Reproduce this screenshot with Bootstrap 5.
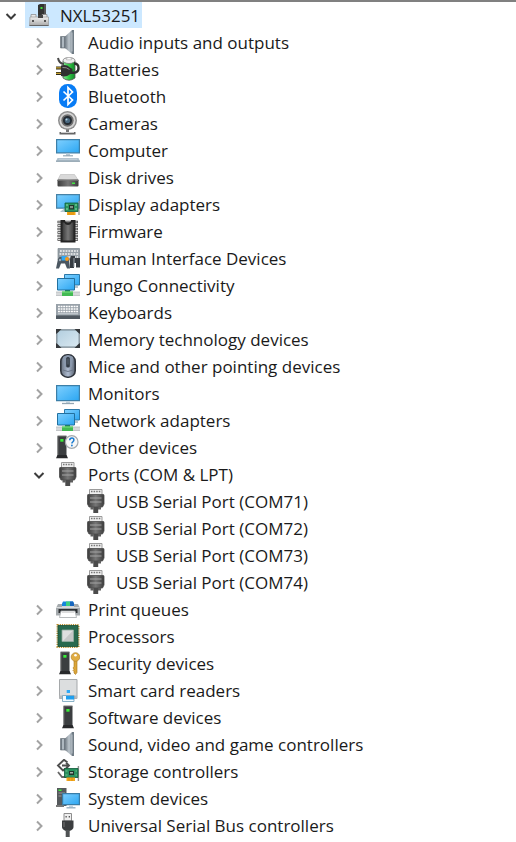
<!DOCTYPE html>
<html lang="en">
<head>
<meta charset="utf-8">
<meta name="viewport" content="width=device-width, initial-scale=1">
<title>Device Manager</title>
<link href="https://cdn.jsdelivr.net/npm/bootstrap@5.3.0/dist/css/bootstrap.min.css" rel="stylesheet">
<style>
  body { font-family: "Open Sans", "Segoe UI", sans-serif; font-size: 17px; line-height: 26px; color: #1a1a1a; background: #fff; }
  .device-tree { border-top: 2px solid #808080; padding-left: 1px; }
  .device-tree ul { padding-left: 28px; }
  .tree-row { height: 27px; gap: 4px; }
  .twisty { width: 20px; height: 28px; color: #a3a3a3; }
  .twisty[aria-expanded="true"] { color: #3c3c3c; }
  .twisty-space { width: 20px; }
  .twisty svg { width: 12px; height: 12px; fill: none; stroke: currentColor; stroke-width: 2; }
  .device { height: 26px; gap: 8px; padding: 0 2px 0 3px; white-space: nowrap; }
  .device.selected { background: #cce8ff; }
  .device > svg { width: 24px; height: 24px; flex: none; }
  .device-name { line-height: 28px; height: 26px; }
</style>
<script src="https://cdn.jsdelivr.net/npm/bootstrap@5.3.0/dist/js/bootstrap.bundle.min.js"></script>
</head>
<body>
<svg width="0" height="0" class="position-absolute" aria-hidden="true">
  <defs>
    <linearGradient id="gScreen" x1="0" y1="0" x2="1" y2="1"><stop offset="0" stop-color="#7fd0ff"/><stop offset="1" stop-color="#2ba6f2"/></linearGradient>
    <linearGradient id="gPale" x1="0" y1="0" x2="1" y2="1"><stop offset="0" stop-color="#b2cedf"/><stop offset="1" stop-color="#dbe9f1"/></linearGradient>
    <linearGradient id="gCone"><stop offset="0" stop-color="#727c85"/><stop offset=".5" stop-color="#bcc5cc"/><stop offset="1" stop-color="#7d8992"/></linearGradient>
    <linearGradient id="gDark"><stop offset="0" stop-color="#3c3c3c"/><stop offset=".5" stop-color="#777"/><stop offset="1" stop-color="#3c3c3c"/></linearGradient>
    <linearGradient id="gGrey" x1="0" y1="0" x2="0" y2="1"><stop offset="0" stop-color="#f0f0f0"/><stop offset="1" stop-color="#a9a9a9"/></linearGradient>
    <linearGradient id="gMouse"><stop offset="0" stop-color="#66707e"/><stop offset=".5" stop-color="#aebbd0"/><stop offset="1" stop-color="#586270"/></linearGradient>
    <linearGradient id="gGreen"><stop offset="0" stop-color="#8ee69a"/><stop offset=".45" stop-color="#35cc48"/><stop offset="1" stop-color="#128a2a"/></linearGradient>

    <symbol id="i-root" viewBox="0 0 24 24">
      <path d="M10 2l2-1h6v12h-8z" fill="#333"/><path d="M16 1h2v12h-2z" fill="#555"/><path d="M12.500 4h2v2h-2z" fill="#3be03b"/>
      <path d="M3 11.500h5v3H3zm11 0h5v3h-5z" fill="#e9e9e9" stroke="#888" stroke-width=".7"/>
      <path d="M2 14h18.500v8.500H1.500z" fill="url(#gGrey)" stroke="#999" stroke-width=".7"/>
      <path d="M10 12h5v3h-5z" fill="#444"/><path d="M4 17h2v2H4zm12 0h2v2h-2z" fill="#555"/><path d="M1.500 22.500h19" stroke="#666" stroke-width="1"/>
    </symbol>
    <symbol id="i-audio" viewBox="0 0 24 24">
      <path d="M4.500 6.500h5.500v11.500H4.500z" fill="#707a83" stroke="#616b73" stroke-width=".6"/><path d="M6 7h2v10.500H6z" fill="#aeb8c0"/>
      <path d="M9 6.500L16 0h1v24h-1L9 18z" fill="url(#gCone)"/><path d="M16 0h2v24h-2z" fill="#707c85"/><path d="M16 2.500v19" stroke="#cad2d8" stroke-width=".8"/>
    </symbol>
    <symbol id="i-battery" viewBox="0 0 24 24">
      <path d="M7 4q6-6 12 0v17q-6 4.500-12 0z" fill="url(#gGreen)" stroke="#555" stroke-width=".8"/>
      <ellipse cx="13" cy="3.500" rx="6" ry="3" fill="#eee" stroke="#777" stroke-width=".8"/><path d="M10.500 1.300q2.500-2 5 0v1.500h-5z" fill="#fafafa" stroke="#999" stroke-width=".5"/>
      <path d="M2 1q1 5.500 6 6" stroke="#484848" stroke-width="2" fill="none"/>
      <path d="M14 15.500q8.500 1.500 8.500-4.500 0-4.500-4.500-4.500" stroke="#2f2f2f" stroke-width="2.400" fill="none"/>
      <path d="M0 11h6m-6 5.500h6" stroke="#2d2a1d" stroke-width="2.800"/><path d="M0 10.800h5m-5 5.500h5" stroke="#c8a332" stroke-width="1.300"/>
      <path d="M5 8.500q5.500-1.500 9 2l2.500 1.500v4l-2.500 1.200q-4 3.300-9 1.800z" fill="#303030"/><path d="M6.500 10.500q4-.5 7 2" stroke="#8c8c8c" fill="none"/>
    </symbol>
    <symbol id="i-bluetooth" viewBox="0 0 24 24">
      <rect x="3" y="0" width="18" height="24" rx="8.500" fill="#087cf5"/>
      <path d="M7.500 7.500l9 8.500-4.500 4.500v-17l4.500 4.500-9 8.500" fill="none" stroke="#fff" stroke-width="1.700"/>
    </symbol>
    <symbol id="i-camera" viewBox="0 0 24 24">
      <path d="M10 17h3v5h-3z" fill="#777"/><path d="M3.500 21h16v2.500h-16z" fill="#666"/><path d="M5 21h13v1H5z" fill="#ccc"/>
      <circle cx="11.500" cy="9.500" r="9.500" fill="#8e8e8e"/><circle cx="11.500" cy="9.500" r="8" fill="#d4d4d4"/><circle cx="11.500" cy="9.500" r="6.200" fill="#6f6f6f"/>
      <circle cx="11.500" cy="9.500" r="4.500" fill="#242c34"/><circle cx="11.500" cy="9.500" r="2.600" fill="#49687f"/><circle cx="10.500" cy="8.500" r="1" fill="#b5d3e5"/>
    </symbol>
    <symbol id="i-computer" viewBox="0 0 24 24">
      <path d="M.6 1.600h22.800v13.200H.6z" fill="url(#gScreen)" stroke="#3c7fa8" stroke-width="1.200"/>
      <path d="M10 15.500h4V18h-4z" fill="#b7c9d5"/><path d="M7 17.800h10" stroke="#96a9b5" stroke-width="1.200"/>
      <path d="M1.500 20h21l1.500 3.500H0z" fill="#b2c2cd"/><path d="M0 23.200h24" stroke="#8ea0ad" stroke-width="1.200"/><path d="M3 21.300h18" stroke="#c9d6de" stroke-width=".8"/>
    </symbol>
    <symbol id="i-disk" viewBox="0 0 24 24">
      <path d="M4.500 9.500h14l4 6H1.500z" fill="#d9d9d9" stroke="#bbb" stroke-width=".6"/>
      <rect x="1.500" y="14.500" width="21" height="7" rx="1" fill="url(#gDark)"/><path d="M1.500 15.300h21" stroke="#777"/><path d="M16 17.500h3v1.500h-3z" fill="#43e843"/>
    </symbol>
    <symbol id="i-display" viewBox="0 0 24 24">
      <path d="M.6 2.600h22.800v13.600H.6z" fill="url(#gScreen)" stroke="#4782a6" stroke-width="1.200"/>
      <path d="M4 20l4-3.500h3V20z" fill="#b6c8d4"/>
      <path d="M23 9v14" stroke="#929292" stroke-width="1.300"/><path d="M9 11h13v8.500H9z" fill="#2b9560" stroke="#0e5d39" stroke-width=".8"/>
      <path d="M13 13h5v4.500h-5z" fill="#20352b"/><path d="M14 14h3v2.200h-3z" fill="#809187"/><path d="M10 13h2m-2 4h2m7-4h2m-2 4h2" stroke="#8fdcaa"/>
      <path d="M11 20h8.500v3H11z" fill="#f4a81c"/><path d="M13 20v3m2-3v3m2-3v3" stroke="#d17e08" stroke-width=".6"/>
    </symbol>
    <symbol id="i-firmware" viewBox="0 0 24 24">
      <path d="M1.500 3h20.500M1.500 6.500h20.500M1.500 10h20.500M1.500 13.500h20.500M1.500 17h20.500M1.500 20.500h20.500" stroke="#3d3d3d" stroke-width="2.600"/>
      <path d="M2 3h19.500M2 6.500h19.500M2 10h19.500M2 13.500h19.500M2 17h19.500M2 20.500h19.500" stroke="#d5d5d5" stroke-width="1.200"/>
      <path d="M4.500 1h4.500q0 2.500 3 2.500t3-2.500h4.500v22.500h-15z" fill="#242424"/><path d="M6.500 3.500h1.700q1 2.500 3.800 2.500t3.800-2.500h1.700v18h-11z" fill="url(#gDark)"/>
    </symbol>
    <symbol id="i-hid" viewBox="0 0 24 24">
      <path d="M2 2.500h21.500V14H2z" fill="#97a0a8" stroke="#7c868e" stroke-width=".7"/>
      <path d="M4 5h18M3.500 8h19M4 11h18" stroke="#f4f4f4" stroke-width="1.600" stroke-dasharray="1.800 1"/>
      <path d="M4 10.500h7l2 2.500 1 9.500h-3l-2-5H5l-2 5H0L2 13z" fill="#4b5761"/>
      <path d="M15 10h4v2h5v9.500h-4V17h-2v5h-4v-9z" fill="#363c42"/><path d="M18 12v9" stroke="#99a2aa"/>
      <path d="M5.500 10h5v4.500h-5z" fill="#31a8f3"/><circle cx="11" cy="13" r="2" fill="#f79a1c"/><circle cx="4" cy="14" r="1.200" fill="#9ca9b4"/>
    </symbol>
    <symbol id="i-network" viewBox="0 0 24 24">
      <path d="M8.500 1.500h15v10.500h-15z" fill="url(#gScreen)" stroke="#2c79a9"/><path d="M17 13h5v2h-5z" fill="#b7c5ce"/>
      <path d="M0 19h24v3.500H0z" fill="#d7d9da"/><path d="M0 22.500h24M0 19h24" stroke="#b0b5b8" stroke-width=".7"/>
      <path d="M9 16.500h5v3H9z" fill="#178d36"/><path d="M6 18.500h11V23H6z" fill="#42ba53"/><path d="M6 19h11" stroke="#7ce083"/>
      <path d="M1.500 5.500h17v11.500h-17z" fill="url(#gScreen)" stroke="#22709f"/>
    </symbol>
    <symbol id="i-keyboard" viewBox="0 0 24 24">
      <path d="M0 4h24v12H0z" fill="#98a1a9"/><path d="M2 6.500h20M2 9h20M2 11.500h20" stroke="#fff" stroke-width="1.500" stroke-dasharray="1.900 .7"/>
      <path d="M2 13.800h20" stroke="#cfd5da" stroke-width="1"/><path d="M0 15.500h24V19H0z" fill="#4f5860"/><path d="M0 15.500h24" stroke="#6d777f"/>
    </symbol>
    <symbol id="i-memory" viewBox="0 0 24 24">
      <rect x=".8" y="2.800" width="22.400" height="17.400" rx="1" fill="url(#gPale)" stroke="#77858f" stroke-width="1.200"/>
      <path d="M0 2h5.500L3.500 4 2 5.500 0 7zm24 0h-5.500l2 2L22 5.500 24 7zM0 21h5.500l-2-2L2 17.500 0 16zm24 0h-5.500l2-2 1.500-1.500 2-1.500z" fill="#35383b"/>
    </symbol>
    <symbol id="i-mouse" viewBox="0 0 24 24">
      <rect x="4.800" y=".8" width="14.400" height="22.400" rx="6.500" fill="url(#gMouse)" stroke="#30353d" stroke-width="1.600"/>
      <path d="M7 3q5-3.500 10 0l-1 10H8z" fill="#8a98ac"/><rect x="10.200" y="3" width="3.600" height="10.500" rx="1.500" fill="#333b45"/><path d="M12 4.500v6" stroke="#697787" stroke-width=".8"/>
      <path d="M7 16q5 3 10 0" stroke="#6d788a" fill="none"/>
    </symbol>
    <symbol id="i-monitor" viewBox="0 0 24 24">
      <path d="M.6 4.600h22.800v15H.6z" fill="url(#gScreen)" stroke="#3c7fa8" stroke-width="1.200"/>
      <path d="M10 20.200h4v2h-4z" fill="#c3d4df"/><path d="M6 22.500h12" stroke="#93a6b3" stroke-width="1.300"/>
    </symbol>
    <symbol id="tower" viewBox="0 0 12 24">
      <path d="M1.500 1h9v20h-9z" fill="#3b3e40"/><path d="M1.500 1h9" stroke="#777"/><path d="M4.300 4h3.200v2.700H4.300z" fill="#39ee39"/><path d="M2.300 2v18" stroke="#555"/>
      <path d="M1.500 20h9l1.500 3.200H0z" fill="#28292b"/>
    </symbol>
    <symbol id="i-other" viewBox="0 0 24 24">
      <use href="#tower" x="0" y="0" width="12" height="24"/><circle cx="15.700" cy="7" r="6.300" fill="#f8f8f8" stroke="#a4a9ad" stroke-width="1.200"/>
      <path d="M13.700 5.300q.2-2.200 2.200-2.200t2 1.900q0 1-1.100 1.800-.9.600-.9 1.700" fill="none" stroke="#1c7cd0" stroke-width="1.500"/><circle cx="15.900" cy="10.500" r=".9" fill="#1c7cd0"/>
    </symbol>
    <symbol id="i-port" viewBox="0 0 24 24">
      <path d="M5.500.5h12.500v6H5.500z" fill="#eee" stroke="#9b9b9b"/><path d="M7 2.500h9.500" stroke="#777" stroke-width="1.500" stroke-dasharray="1.500 1.100"/>
      <path d="M4 5.500h15.500q.5 0 .5 1v8.500l-1.500 3H5l-1.500-3V6.500q0-1 .5-1z" fill="url(#gDark)" stroke="#4a4a4a" stroke-width=".8"/><path d="M6 9h11.500M6 13h11.500" stroke="#a6a6a6"/>
      <path d="M6.500 18h3v2.500h-3zm7.500 0h3v2.500h-3z" fill="#5e5e5e"/><path d="M9.300 18h4.900v6H9.300z" fill="#4b4b4b"/>
    </symbol>
    <symbol id="i-printer" viewBox="0 0 24 24">
      <path d="M5 9l2-4.500h10L19 9z" fill="#1585dc"/><path d="M10 4.500h4V9h-4z" fill="#3ccf80"/><path d="M14 4.500h3L19 9h-5z" fill="#1766bd"/>
      <path d="M2 7h4v2.500h12V7h4l2 4v7.500H0V11z" fill="#a5aaad"/><path d="M0 10.500h24" stroke="#d9dbdc"/><path d="M2.500 12h19v4h-19z" fill="#2d3033"/>
      <path d="M5 14h14l1.500 6.500h-17z" fill="#fff" stroke="#a7abad" stroke-width=".8"/><path d="M6 15.500h12" stroke="#ddd"/>
    </symbol>
    <symbol id="i-cpu" viewBox="0 0 24 24">
      <path d="M1.500 1h21v22h-21z" fill="none" stroke="#b88c2c" stroke-width="2" stroke-dasharray="1.200 1"/>
      <path d="M2 1.500h20v21H2z" fill="#28694e" stroke="#17513a" stroke-width=".8"/><path d="M6 6h11.500v11.500H6z" fill="#dedfdf" stroke="#92aaa0" stroke-width=".8"/><path d="M17 6.500v10.500H7z" fill="#c5c7c7"/>
    </symbol>
    <symbol id="i-security" viewBox="0 0 24 24">
      <use href="#tower" x="3" y="0" width="12" height="24"/>
      <path d="M18 9.500h3v12l-1.500 2-1.500-1.500v-1.500l-1-1 1-1.200-1-1.300 1-1.500z" fill="#dba63b" stroke="#a97619" stroke-width=".6"/>
      <circle cx="19.500" cy="6" r="4.300" fill="#e0ac42" stroke="#b2842d" stroke-width=".7"/><circle cx="19.500" cy="4.300" r="1.300" fill="#fff"/>
    </symbol>
    <symbol id="i-smart" viewBox="0 0 24 24">
      <path d="M3.500 1.500h17.500v19H3.500z" fill="#dcdedf" stroke="#a5a8aa"/><path d="M10.700 12h3.300v3h-3.300z" fill="#2fa9f7"/>
      <path d="M3.500 17.500h17.500v3H3.500z" fill="#b7babc"/><path d="M6.500 17.500h11.500v6H6.500z" fill="#f4fbff" stroke="#6f9fba" stroke-width=".8"/><path d="M10 18h8v3.500h-8z" fill="#1f9fef"/>
    </symbol>
    <symbol id="i-software" viewBox="0 0 24 24"><use href="#tower" x="6" y="0" width="12" height="24"/></symbol>
    <symbol id="i-storage" viewBox="0 0 24 24">
      <path d="M11.500 3.500L8 .8 2 6.500l5 5 2.500-2M6 6.500h7m-3-3l3 3-3 3" fill="none" stroke="#4e4e4e" stroke-width="1.900"/><path d="M2 13l4 5h4" fill="none" stroke="#666" stroke-width="1.800"/>
      <path d="M22.400 7v15" stroke="#929292" stroke-width="1.400"/><path d="M8.500 9.500h13.500v9H8.500z" fill="#2a915f" stroke="#0d5837" stroke-width=".8"/>
      <path d="M13 12h5v4h-5z" fill="#20352b"/><path d="M14 13h3v1.500h-3z" fill="#a4b3aa"/><path d="M9.500 12h2m-2 4h2m8-4h1.500m-1.500 4h1.500" stroke="#72c290"/>
      <path d="M10.500 18.500h8.500V22h-8.500z" fill="#f4a81c"/><path d="M13 18.500V22m3-3.500V22" stroke="#cf8211" stroke-width=".6"/>
    </symbol>
    <symbol id="i-system" viewBox="0 0 24 24">
      <path d="M1 2h9.500v18H1z" fill="#55595c"/><path d="M2.500 3.500h3V5h-3z" fill="#3bf03b"/><path d="M2.500 7h6.500m-6.500 3h3" stroke="#999"/><path d="M0 19h8v2H0z" fill="#777"/>
      <path d="M6.600 7.600h16.800v11H6.600z" fill="url(#gScreen)" stroke="#397da7" stroke-width="1.200"/><path d="M13 19.200h4v2h-4z" fill="#c3d4df"/><path d="M10.500 21.800h9" stroke="#91aabd" stroke-width="1.300"/>
    </symbol>
    <symbol id="i-usb" viewBox="0 0 24 24">
      <path d="M8 .5h7.500v7.500H8z" fill="#eee" stroke="#8d8d8d"/><path d="M9.500 3h1.300v1.500H9.500zm3.200 0H14v1.500h-1.300z" fill="#555"/>
      <path d="M6 7.500h11.500v6.500q0 2.500-4 4H10q-4-1.500-4-4z" fill="#3c3e40"/><path d="M8 9v5" stroke="#777"/><path d="M9.700 17h4v7h-4z" fill="#4f5254"/>
    </symbol>
    <symbol id="c-right" viewBox="0 0 12 12"><path d="M4 1.500L8.500 6 4 10.500"/></symbol>
    <symbol id="c-down" viewBox="0 0 12 12"><path d="M1.500 4L6 8.500 10.500 4"/></symbol>
  </defs>
</svg>

<main class="device-tree">
  <div class="tree-row d-flex">
    <button class="twisty btn p-0 border-0 d-flex align-items-center justify-content-center" type="button" aria-expanded="true" aria-label="Collapse NXL53251"><svg><use href="#c-down"/></svg></button>
    <span class="device selected d-flex align-items-center"><svg><use href="#i-root"/></svg><span class="device-name">NXL53251</span></span>
  </div>
  <ul class="list-unstyled mb-0" id="categories"></ul>
</main>

<script>
  const categories = [
    ["audio", "Audio inputs and outputs"], ["battery", "Batteries"], ["bluetooth", "Bluetooth"],
    ["camera", "Cameras"], ["computer", "Computer"], ["disk", "Disk drives"],
    ["display", "Display adapters"], ["firmware", "Firmware"], ["hid", "Human Interface Devices"],
    ["network", "Jungo Connectivity"], ["keyboard", "Keyboards"], ["memory", "Memory technology devices"],
    ["mouse", "Mice and other pointing devices"], ["monitor", "Monitors"], ["network", "Network adapters"],
    ["other", "Other devices"],
    ["port", "Ports (COM & LPT)", ["USB Serial Port (COM71)", "USB Serial Port (COM72)", "USB Serial Port (COM73)", "USB Serial Port (COM74)"]],
    ["printer", "Print queues"], ["cpu", "Processors"], ["security", "Security devices"],
    ["smart", "Smart card readers"], ["software", "Software devices"], ["audio", "Sound, video and game controllers"],
    ["storage", "Storage controllers"], ["system", "System devices"], ["usb", "Universal Serial Bus controllers"]
  ];
  const escapeText = s => s.replace(/&/g, "&amp;");
  const device = (icon, name) =>
    `<span class="device d-flex align-items-center"><svg><use href="#i-${icon}"/></svg><span class="device-name">${escapeText(name)}</span></span>`;
  const twisty = (name, open) =>
    `<button class="twisty btn p-0 border-0 d-flex align-items-center justify-content-center" type="button" aria-expanded="${open}" aria-label="${open ? "Collapse" : "Expand"} ${escapeText(name)}"><svg><use href="#c-${open ? "down" : "right"}"/></svg></button>`;
  document.getElementById("categories").innerHTML = categories.map(([icon, name, children]) =>
    `<li><div class="tree-row d-flex">${twisty(name, !!children)}${device(icon, name)}</div>` +
    (children ? `<ul class="list-unstyled mb-0">${children.map(c =>
      `<li class="tree-row d-flex"><span class="twisty-space"></span>${device(icon, c)}</li>`).join("")}</ul>` : "") +
    `</li>`).join("");
</script>
</body>
</html>
